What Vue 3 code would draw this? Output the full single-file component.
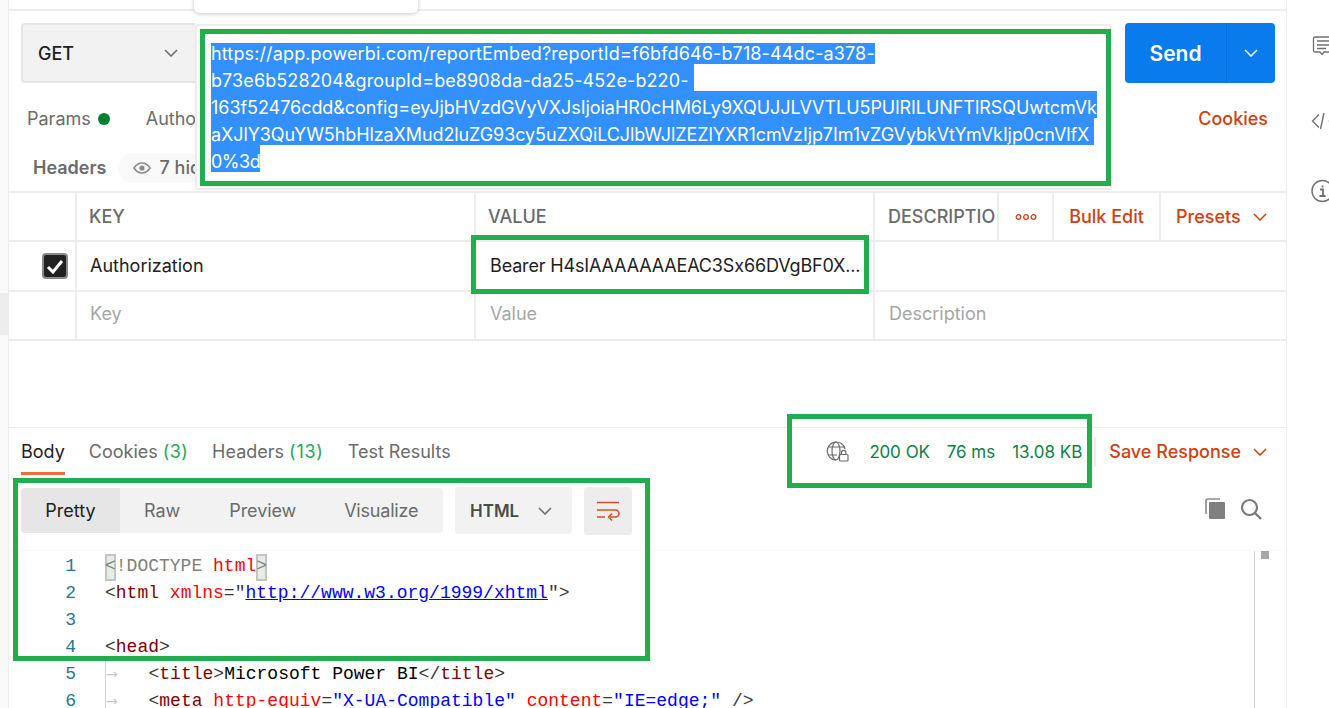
<script setup>
const urlLines = [
  { t: 'https://app.powerbi.com/reportEmbed?reportId=f6bfd646-b718-44dc-a378-', ls: 0.135, first: true },
  { t: 'b73e6b528204&groupId=be8908da-da25-452e-b220- ', ls: 0.1 },
  { t: '163f52476cdd&config=eyJjbHVzdGVyVXJsIjoiaHR0cHM6Ly9XQUJJLVVTLU5PUlRILUNFTlRSQUwtcmVk', ls: -0.05 },
  { t: 'aXJlY3QuYW5hbHlzaXMud2luZG93cy5uZXQiLCJlbWJlZEZlYXR1cmVzIjp7Im1vZGVybkVtYmVkIjp0cnVlfX ', ls: -0.09 },
  { t: '0%3d', ls: -0.5 }
]
const lineNos = [1, 2, 3, 4, 5, 6]
</script>

<template>
  <div class="app">
    <div class="gutter"><div class="gutter-mark"></div></div>
    <div class="main">
      <div class="topstrip"></div>
      <div class="popover"></div>

      <div class="reqrow">
        <div class="method">
          <span>GET</span>
          <svg class="chev" width="14" height="8" viewBox="0 0 14 8"><path d="M1 1l6 6 6-6" /></svg>
        </div>
        <div class="spacer"></div>
        <div class="send">
          <span class="send-label">Send</span>
          <span class="send-arrow">
            <svg class="chev white" width="14" height="8" viewBox="0 0 14 8"><path d="M1 1l6 6 6-6" /></svg>
          </span>
        </div>
      </div>

      <div class="tabs1">
        <span class="tab">Params</span><span class="dot"></span>
        <span class="tab auth">Authorization</span>
        <span class="cookies">Cookies</span>
      </div>
      <div class="tabs2">
        <span class="tab strong">Headers</span>
        <span class="hidden-pill">
          <svg width="18" height="12" viewBox="0 0 18 12"><path d="M1 6c2-3 5-5 8-5s6 2 8 5c-2 3-5 5-8 5S3 9 1 6z" fill="none" stroke="#8a8a8a" stroke-width="1.6"/><circle cx="9" cy="6" r="2.6" fill="#8a8a8a"/></svg>
          <b>7 hidden</b>
        </span>
      </div>

      <div class="url-box">
        <div class="sel-line" :class="{ first: l.first }" v-for="l in urlLines" :key="l.t" :style="{ letterSpacing: l.ls + 'px' }">{{ l.t }}</div>
      </div>

      <div class="table">
        <div class="row head">
          <div class="c0"></div>
          <div class="c1">KEY</div>
          <div class="c2">VALUE</div>
          <div class="c3 desc">DESCRIPTIO</div>
          <div class="c4"><svg width="22" height="6" viewBox="0 0 22 6"><g fill="none" stroke="#d14012" stroke-width="1.3"><circle cx="3.5" cy="3" r="2.3"/><circle cx="11" cy="3" r="2.3"/><circle cx="18.5" cy="3" r="2.3"/></g></svg></div>
          <div class="c5">Bulk Edit</div>
          <div class="c6">Presets
            <svg class="chev red" width="14" height="8" viewBox="0 0 14 8"><path d="M1 1l6 6 6-6" /></svg>
          </div>
        </div>
        <div class="row body">
          <div class="c0"><span class="check"><svg width="18" height="15" viewBox="0 0 18 15"><path d="M2 8l5 5 9-11" fill="none" stroke="#fff" stroke-width="3"/></svg></span></div>
          <div class="c1 txt">Authorization</div>
          <div class="c2 txt">Bearer H4sIAAAAAAAEAC3Sx66DVgBF0X...</div>
          <div class="c3b"></div>
        </div>
        <div class="row body last">
          <div class="c0"></div>
          <div class="c1 ph">Key</div>
          <div class="c2 ph">Value</div>
          <div class="c3b ph">Description</div>
        </div>
      </div>

      <div class="resp-tabs">
        <span class="rt active">Body</span>
        <span class="rt">Cookies <em>(3)</em></span>
        <span class="rt hd">Headers <em>(13)</em></span>
        <span class="rt">Test Results</span>
        <span class="grow"></span>
        <svg class="globe" width="26" height="24" viewBox="0 0 26 24">
          <g fill="none" stroke="#6b6b6b" stroke-width="1.2">
            <path d="M20 9a9 9 0 1 0-9 11" />
            <ellipse cx="11" cy="11" rx="4" ry="9" />
            <path d="M3 7h16M3 15h9" />
            <rect x="14.5" y="14.5" width="8.5" height="6.5" rx="1" />
            <path d="M16.5 14.5v-2a2.2 2.2 0 0 1 4.4 0v2" />
          </g>
        </svg>
        <span class="stat s1">200 OK</span>
        <span class="stat s2">76 ms</span>
        <span class="stat s3">13.08 KB</span>
        <span class="vsep"></span>
        <span class="save">Save Response</span>
        <svg class="chev red save-chev" width="14" height="8" viewBox="0 0 14 8"><path d="M1 1l6 6 6-6" /></svg>
      </div>

      <div class="toolbar">
        <div class="seg">
          <span class="seg-item on">Pretty</span>
          <span class="seg-item raw">Raw</span>
          <span class="seg-item prev">Preview</span>
          <span class="seg-item vis">Visualize</span>
        </div>
        <div class="lang"><b>HTML</b><svg class="chev" width="14" height="8" viewBox="0 0 14 8"><path d="M1 1l6 6 6-6" /></svg></div>
        <div class="wrap">
          <svg width="24" height="20" viewBox="0 0 24 20"><g fill="none" stroke="#dd4f1c" stroke-width="1.5"><path d="M1 1.500h22M1 9h18.500a3.500 3.500 0 0 1 0 7H14M1 16h8M16 12.500l-3.500 3.500 3.500 3.500"/></g></svg>
        </div>
        <span class="grow"></span>
        <svg class="copy" width="22" height="22" viewBox="0 0 22 22"><path d="M2 16V3a2 2 0 0 1 2-2h12" fill="none" stroke="#8a8a8a" stroke-width="1.6"/><rect x="5" y="4" width="16" height="17" rx="1" fill="#808080"/></svg>
        <svg class="search" width="22" height="22" viewBox="0 0 22 22"><circle cx="9.500" cy="9.500" r="7.500" fill="none" stroke="#7a7a7a" stroke-width="2.200"/><path d="M15 15l6 6" stroke="#7a7a7a" stroke-width="2.400"/></svg>
      </div>

      <div class="editor">
        <div class="nums"><div v-for="n in lineNos" :key="n" class="num">{{ n }}</div></div>
        <div class="code">
          <div class="cl"><span class="bm">&lt;</span><span class="gr">!DOCTYPE</span> <span class="at">html</span><span class="bm">&gt;</span></div>
          <div class="cl">&lt;<span class="tg">html</span> <span class="at">xmlns</span>="<a class="lk">http://www.w3.org/1999/xhtml</a>"&gt;</div>
          <div class="cl"></div>
          <div class="cl">&lt;<span class="tg">head</span>&gt;</div>
          <div class="cl ind"><span class="arr">→</span>&lt;<span class="tg">title</span>&gt;<span class="tx">Microsoft Power BI</span>&lt;/<span class="tg">title</span>&gt;</div>
          <div class="cl ind"><span class="arr">→</span>&lt;<span class="tg">meta</span> <span class="at">http-equiv</span>=<span class="vl">"X-UA-Compatible"</span> <span class="at">content</span>=<span class="vl">"IE=edge;"</span> /&gt;</div>
        </div>
        <div class="mini"><span class="mini-thumb"></span></div>
      </div>

      <div class="mark m-url"></div>
      <div class="mark m-val"></div>
      <div class="mark m-stat"></div>
      <div class="mark m-body"></div>
    </div>

    <div class="side">
      <svg class="ic-comment" width="24" height="21" viewBox="0 0 24 21"><g fill="none" stroke="#707070" stroke-width="1.3"><path d="M3 1h21v15H12l-2 2.500L8 16H3a1.500 1.500 0 0 1-1.500-1.500v-12A1.500 1.500 0 0 1 3 1z"/><path d="M5 5h16M5 9h16M5 12.500h9"/></g></svg>
      <svg class="ic-code" width="20" height="18" viewBox="0 0 20 18"><g fill="none" stroke="#707070" stroke-width="1.4"><path d="M8 2.500L1.500 9 8 15.500M13 1L9.500 17M18.500 8v2"/></g></svg>
      <svg class="ic-info" width="24" height="24" viewBox="0 0 24 24"><circle cx="11.500" cy="12" r="10.500" fill="none" stroke="#707070" stroke-width="1.400"/><path d="M9 10.500h3v6M8.500 17h6M11.500 6.500v2" fill="none" stroke="#707070" stroke-width="1.800"/></svg>
    </div>
  </div>
</template>

<style>
html, body { margin: 0; background: #fff; overflow: hidden; }
</style>

<style scoped>
.app {
  width: 1329px; height: 708px; display: flex; overflow: hidden; background: #fff;
  font-family: Inter, "Liberation Sans", sans-serif; font-size: 18px; color: #212121;
}
.gutter { width: 8px; flex: none; background: #f9f9f9; border-right: 1px solid #ededed; position: relative; }
.gutter-mark { position: absolute; left: 0; top: 293px; width: 8px; height: 42px; background: #ededed; }
.main { position: relative; width: 1277px; flex: none; border-right: 1px solid #ededed; }
.side { flex: 1; display: flex; flex-direction: column; padding: 36px 0 0 25px; overflow: hidden; }
.side svg { flex: none; }
.ic-code { margin-top: 55px; margin-left: -1px; }
.ic-info { margin-top: 49px; margin-left: -1px; }

.topstrip { height: 9px; border-bottom: 2px solid #ededed; }
.popover { position: absolute; left: 185px; top: -10px; width: 224px; height: 23px; background: #fff; border-radius: 5px; box-shadow: 0 1px 4px rgba(0,0,0,.22); }

.reqrow { display: flex; padding: 12px 11px 0 12px; height: 60px; }
.method { width: 174px; box-sizing: border-box; height: 60px; background: #f2f2f2; border: 2px solid #e6e6e6; border-right: 0; border-radius: 4px 0 0 4px; display: flex; align-items: center; justify-content: space-between; padding: 0 17px 0 15px; font-weight: 500; }
.spacer { flex: 1; }
.send { width: 150px; height: 60px; background: #097bed; color: #fff; border-radius: 4px; display: flex; font-weight: 600; font-size: 21px; }
.send-label { width: 101px; display: flex; align-items: center; justify-content: center; border-right: 1px solid #0a6cd0; }
.send-arrow { flex: 1; display: flex; align-items: center; justify-content: center; }

.chev { fill: none; stroke: #6b6b6b; stroke-width: 1.5; flex: none; }
.chev.white { stroke: #fff; }
.chev.red { stroke: #d14012; }

.tabs1 { display: flex; align-items: center; height: 49px; margin-top: 11px; padding-left: 18px; padding-right: 18px; }
.tab { color: #6b6b6b; white-space: nowrap; }
.dot { width: 12px; height: 12px; border-radius: 50%; background: #007f31; margin-left: 7px; }
.auth { margin-left: 36px; }
.cookies { margin-left: auto; color: #d14012; font-weight: 500; }
.tabs2 { display: flex; align-items: center; height: 49px; padding-left: 24px; }
.strong { font-weight: 600; }
.hidden-pill { margin-left: 11px; height: 30px; width: 110px; border-radius: 15px; background: #f9f9f9; display: flex; align-items: center; gap: 9px; padding-left: 15px; color: #6b6b6b; }
.hidden-pill b { font-weight: 500; white-space: nowrap; }

.url-box { position: absolute; left: 186px; top: 24px; width: 917px; height: 166px; box-sizing: border-box; background: #fff; border: 2px solid #ededed; border-radius: 3px; padding: 17px 0 0 14px; }
.sel-line { width: fit-content; height: 27px; box-sizing: border-box; padding-top: 3px; line-height: 27px; background: #3390ff; color: #fff; white-space: pre; }
.sel-line.first { height: 21px; padding-top: 0; line-height: 21px; }

.row { display: flex; border-bottom: 2px solid #ededed; box-sizing: border-box; }
.head { height: 51px; border-top: 2px solid #ededed; margin-top: -1px; color: #6b6b6b; font-weight: 500; }
.body { height: 50px; }
.last { height: 49px; }
.row > div { display: flex; align-items: center; box-sizing: border-box; height: 100%; flex: none; }
.c0 { width: 68px; border-right: 2px solid #ededed; justify-content: flex-end; padding-right: 7px; }
.c1 { width: 399px; border-right: 2px solid #ededed; padding-left: 12px; }
.c2 { width: 399px; border-right: 2px solid #ededed; padding-left: 12px; }
.c3 { width: 124px; border-right: 2px solid #ededed; padding-left: 13px; overflow: hidden; white-space: nowrap; }
.c3b { flex: 1 !important; width: 411px; padding-left: 13px; }
.c4 { width: 55px; border-right: 2px solid #ededed; justify-content: center; }
.c5 { width: 107px; border-right: 2px solid #ededed; justify-content: center; color: #d14012; font-weight: 500; }
.c6 { flex: 1 !important; color: #d14012; font-weight: 500; padding-left: 15px; gap: 12px; }
.txt { color: #212121; padding-left: 13px; padding-bottom: 1px; }
.c2.txt { padding-left: 14px; letter-spacing: -0.15px; white-space: nowrap; overflow: hidden; }
.ph { color: #a6a6a6; padding-left: 13px; padding-bottom: 4px; }
.c2.ph { padding-left: 14px; }
.c3b.ph { padding-left: 14px; }
.check { width: 26px; height: 26px; box-sizing: border-box; border-radius: 4px; background: #212121; border: 2px solid #8a8a8a; display: flex; align-items: center; justify-content: center; }

.resp-tabs { margin-top: 86px; height: 48px; border-top: 1px solid #ededed; display: flex; align-items: center; padding: 0 19px 0 12px; position: relative; }
.rt { color: #6b6b6b; margin-right: 24px; white-space: nowrap; line-height: 22px; margin-bottom: 1px; }
.rt em { font-style: normal; color: #26a65b; letter-spacing: 0.33px; }
.rt.hd em { letter-spacing: 0.75px; }
.rt.active { color: #212121; position: relative; }
.rt.active::after { content: ""; position: absolute; left: 0; right: 0; top: 31px; height: 3px; background: #f26b3a; }
.grow { flex: 1; }
.globe { flex: none; margin-right: 17px; }
.stat { color: #0f8043; font-size: 17px; white-space: nowrap; }
.s1 { word-spacing: 1px; letter-spacing: -0.3px; margin-left: 1px; }
.s2 { margin-left: 17px; }
.s3 { margin-left: 17px; }
.vsep { width: 2px; height: 30px; background: #ededed; margin: 0 13px 0 12px; flex: none; }
.save { color: #d14012; font-weight: 500; white-space: nowrap; margin-bottom: 1px; }
.save-chev { margin-left: 12px; }

.toolbar { height: 45px; margin-top: 12px; display: flex; align-items: center; padding: 0 24px 0 12px; }
.seg { width: 422px; height: 45px; background: #f2f2f2; border-radius: 4px; display: flex; align-items: center; color: #6b6b6b; overflow: hidden; flex: none; }
.seg-item { height: 45px; display: flex; align-items: center; }
.on { width: 99px; background: #e6e6e6; color: #212121; justify-content: center; }
.raw { margin-left: 24px; }
.prev { margin-left: 49px; letter-spacing: -0.1px; }
.vis { margin-left: 48px; letter-spacing: -0.2px; }
.lang { width: 117px; height: 47px; background: #f2f2f2; border-radius: 4px; margin-left: 12px; box-sizing: border-box; padding: 0 20px 0 15px; display: flex; align-items: center; justify-content: space-between; color: #4a4a4a; flex: none; font-size: 17px; }
.lang b { font-weight: 600; }
.wrap { width: 48px; height: 48px; background: #ededed; border-radius: 4px; margin-left: 12px; display: flex; align-items: center; justify-content: center; flex: none; }
.copy { margin-right: 14px; flex: none; margin-top: -4px; }
.search { flex: none; margin-top: -4px; }

.editor { display: flex; position: relative; margin-top: 17px; height: 160px; border-top: 1px solid #fafafa; font-family: "Liberation Mono", monospace; font-size: 18px; line-height: 27px; }
.nums { width: 67px; text-align: right; color: #237893; box-sizing: border-box; flex: none; padding-top: 2px; }
.num { height: 27px; }
.code { margin-left: 29px; padding-top: 2px; color: #383838; flex: none; position: relative; isolation: isolate; }
.cl { height: 27px; white-space: pre; position: relative; }
.ind { padding-left: 43.5px; }
.ind::before { content: ""; position: absolute; left: 0; top: 0; bottom: 0; width: 1px; background: #d3d3d3; }
.arr { position: absolute; left: 1px; color: #c8c8c8; font-size: 14px; font-family: "DejaVu Sans", sans-serif; }
.bm { color: #808080; position: relative; }
.bm::before { content: ""; position: absolute; left: 0; right: 0; top: -2px; height: 27px; background: #e4efe4; box-shadow: inset 0 0 0 2px #c4c4c4; z-index: -1; }
.gr { color: #808080; }
.at { color: #ff0000; }
.tg { color: #800000; }
.lk { color: #0000ff; text-decoration: underline; }
.vl { color: #0000ff; }
.tx { color: #000; }
.mini { position: absolute; left: 1245px; top: 0; bottom: 0; width: 30px; border-left: 1px solid #d3d3d3; }
.mini-thumb { position: absolute; left: 6px; top: 0; width: 8px; height: 8px; background: #a6a6a6; }

.mark { position: absolute; border: 5px solid #22ad4e; box-sizing: border-box; pointer-events: none; }
.m-url { left: 191px; top: 29px; width: 911px; height: 157px; }
.m-val { left: 462px; top: 235px; width: 398px; height: 59px; }
.m-stat { left: 778px; top: 414px; width: 305px; height: 74px; }
.m-body { left: 4px; top: 478px; width: 637px; height: 183px; }
</style>
